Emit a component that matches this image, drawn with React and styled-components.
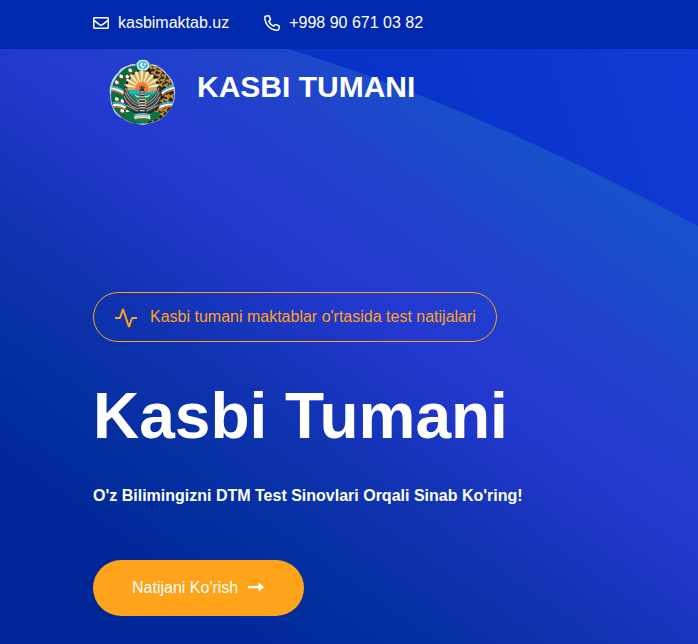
import React from 'react';
import styled, { createGlobalStyle } from 'styled-components';
import { FaRegEnvelope } from 'react-icons/fa';

const GlobalStyle = createGlobalStyle`
  * { box-sizing: border-box; }
  body {
    margin: 0;
    background: #002797;
    color: #fff;
    font-family: "Liberation Sans", Arial, sans-serif;
    font-size: 16px;
    line-height: 24px;
  }
`;

const Page = styled.div`
  display: flex;
  flex-direction: column;
  min-height: 100vh;
`;

const Container = styled.div`
  width: 100%;
  max-width: 540px;
  margin: 0 auto;
  padding: 0 14px;
`;

const TopBar = styled.div`
  background: #0029ae;
  padding: 11px 0 14px;
`;

const ContactList = styled.address`
  display: flex;
  flex-wrap: wrap;
  gap: 0 35px;
  font-style: normal;
`;

const ContactLink = styled.a`
  display: inline-flex;
  align-items: center;
  gap: 9px;
  color: #fff;
  text-decoration: none;
`;

const Hero = styled.div`
  position: relative;
  flex: 1;
  overflow: hidden;
`;

const Backdrop = styled.svg`
  position: absolute;
  inset: 0;
  width: 100%;
  height: 100%;
`;

const HeroBody = styled.div`
  position: relative;
`;

const Brand = styled.a`
  display: flex;
  align-items: flex-start;
  gap: 21px;
  padding: 10px 0 0 16px;
  color: #fff;
  text-decoration: none;
`;

const BrandName = styled.span`
  padding-top: 10px;
  font-size: 30px;
  line-height: 36px;
  font-weight: 700;
`;

const Intro = styled.main`
  display: flex;
  flex-direction: column;
  align-items: flex-start;
  padding: 166px 0 28px;
`;

const Tag = styled.p`
  display: flex;
  align-items: center;
  gap: 12px;
  margin: 0 0 36px;
  padding: 12px 20px;
  border: 1px solid #ffa31a;
  border-radius: 25px;
  color: #ffa31a;
`;

const Title = styled.h1`
  margin: 0 0 30px;
  font-size: 64px;
  line-height: 76px;
  font-weight: 700;
`;

const Lead = styled.p`
  margin: 0 0 52px;
  font-weight: 700;
`;

const ResultsButton = styled.button`
  display: inline-flex;
  align-items: center;
  gap: 9px;
  padding: 16px 39px;
  border: 0;
  border-radius: 28px;
  background: #ffa31a;
  color: #fff;
  font: inherit;
  cursor: pointer;
`;

const PhoneIcon = () => (
  <svg width="16" height="16" viewBox="0 0 16 16" fill="none" stroke="currentColor" strokeWidth="1.5" strokeLinejoin="round" aria-hidden="true">
    <path d="M1.6 1.3 4.2.7Q4.9.6 5.2 1.2L6.4 4.1Q6.6 4.7 6.2 5.1L4.8 6.3Q6.4 9.6 9.7 11.2L10.9 9.8Q11.3 9.4 11.9 9.6L14.8 10.8Q15.4 11.1 15.3 11.8L14.7 14.4Q14.5 15.2 13.7 15.2C6.5 15.2.8 9.5.8 2.3Q.8 1.5 1.6 1.3Z" />
  </svg>
);

const ArrowIcon = () => (
  <svg width="18" height="18" viewBox="0 0 18 18" fill="currentColor" aria-hidden="true">
    <path d="M1.4 6.9H11.4V5Q11.4 3.5 12.7 4.3L16.4 7.4Q17.1 8 16.4 8.7L12.7 11.8Q11.4 12.6 11.4 11.1V9.2H1.4Q1 9.2 1 8.8V7.3Q1 6.9 1.4 6.9Z" />
  </svg>
);

const PulseIcon = () => (
  <svg width="24" height="24" viewBox="0 0 24 24" fill="none" stroke="currentColor" strokeWidth="2" strokeLinejoin="bevel" aria-hidden="true">
    <path d="M1 13H6L9 4 15 22 18 13H23" />
  </svg>
);

const HeroBackdrop = () => (
  <Backdrop viewBox="0 0 698 595" preserveAspectRatio="none" aria-hidden="true">
    <defs>
      <linearGradient id="sky" gradientUnits="userSpaceOnUse" x1="400" y1="100" x2="698" y2="0">
        <stop offset="0" stopColor="#0833c8" />
        <stop offset="1" stopColor="#103bd6" />
      </linearGradient>
      <linearGradient id="disc" gradientUnits="userSpaceOnUse" x1="121" y1="506" x2="496" y2="-23">
        <stop offset="0" stopColor="#002797" />
        <stop offset="0.14" stopColor="#042f9f" />
        <stop offset="0.32" stopColor="#1033b1" />
        <stop offset="0.5" stopColor="#2138cb" />
        <stop offset="0.55" stopColor="#2439d0" />
        <stop offset="0.74" stopColor="#1f45cb" />
        <stop offset="0.91" stopColor="#1752cb" />
      </linearGradient>
    </defs>
    <rect width="698" height="595" fill="url(#sky)" />
    <path d="M0 0H288Q479 59 698 177V595H0Z" fill="url(#disc)" />
  </Backdrop>
);

const rays = [-80, -60, -40, -20, 0, 20, 40, 60, 80];
const grains = [
  [150, 50], [165, 53], [180, 62], [161, 67], [176, 75], [192, 76], [172, 88], [188, 90], [204, 91],
  [181, 103], [197, 105], [213, 106], [185, 151], [200, 149], [187, 163], [181, 177], [195, 179],
  [169, 185], [156, 193], [171, 199], [185, 191], [155, 207], [200, 137], [213, 138],
];
const cotton = [[91, 60], [64, 78], [83, 79], [51, 96], [51, 146], [68, 152], [67, 181], [83, 184], [94, 195]];

const Emblem = () => (
  <svg width="67" height="67" viewBox="27 25 200 200" role="img" aria-label="O'zbekiston gerbi">
    <path d="M110 42Q113 27 128 27T147 42Q164 38 178 50 193 56 199 70 215 82 219 99 227 116 223 134 224 154 211 170 204 190 185 202 168 216 146 217 127 226 108 217 84 217 67 201 45 194 38 171 29 153 31 133 26 115 33 98 39 77 54 66 62 50 83 45 96 36 110 42Z" fill="#cbd5ea" />
    <path d="M112 45Q82 42 61 65 33 93 33 131 31 171 60 195 87 220 126 218V46Z" fill="#086c3b" />
    <path d="M145 45Q172 43 193 67 221 93 221 132 219 173 191 197 165 219 128 217V46Z" fill="#2b2414" />
    <g fill="#bd9546">
      {grains.map(([x, y]) => (
        <path key={`${x}-${y}`} d={`M${x - 7} ${y - 5}q8-2 14 8l-2 4q-8-7-14-7ZM${x + 8} ${y - 9}q-2 8-7 10l-2-4q2-6 9-6Z`} />
      ))}
    </g>
    {cotton.map(([x, y]) => (
      <g key={`${x}-${y}`}>
        <path d={`M${x - 8} ${y + 1}l7 9 9-4-3-7Z`} fill="#a6421c" />
        <path d={`M${x - 6} ${y - 4}q4-6 7-1 6 1 4 6-2 4-7 2-5 1-4-7Z`} fill="#fff" />
      </g>
    ))}
    <g fill="none" strokeWidth="6">
      <path d="M34 106Q54 109 72 121M184 122Q202 109 221 105M38 157Q58 153 77 164M177 165Q194 153 218 155" stroke="#30add9" />
      <path d="M34 112Q54 115 72 127M184 128Q202 115 221 111M39 163Q58 159 77 170M177 171Q194 159 216 161" stroke="#fff" />
      <path d="M34 118Q54 121 72 133M184 134Q202 121 221 117M41 169Q59 165 77 176M177 177Q194 165 214 167" stroke="#f17832" strokeWidth="4" />
    </g>
    <ellipse cx="126" cy="126" rx="54" ry="67" fill="#252621" />
    <ellipse cx="126" cy="118" rx="45" ry="57" fill="#d1a85c" />
    <g fill="#fff1c4">
      {rays.map((angle) => (
        <path key={angle} d="M124 98 121 61Q125 57 129 61L126 98Z" transform={`rotate(${angle} 125 112)`} />
      ))}
    </g>
    <circle cx="125" cy="114" r="20" fill="#f57834" />
    <path d="M82 119Q103 115 125 121T169 119L165 149 85 149Z" fill="#159d86" />
    <path d="M85 121Q106 116 120 122T167 120L164 129H88Z" fill="#20b4cf" />
    <path d="M91 135 108 128 122 144 103 148ZM161 134 142 128 130 145 149 149Z" fill="#16935b" />
    <path d="M105 132q10 10 15 3M148 132q-10 10-15 3" fill="none" stroke="#edf5dd" strokeWidth="3" />
    <path d="M76 100Q83 135 115 154L118 185Q81 182 71 150 68 126 76 100ZM176 100Q169 135 137 154L134 185Q171 182 181 150 184 126 176 100Z" fill="#393b39" />
    <path d="M74 124Q85 155 117 167M72 136Q86 170 117 174M76 112Q85 146 116 159M78 163L113 180M178 124Q167 155 135 167M180 136Q166 170 135 174M176 112Q167 146 136 159M174 163L139 180" fill="none" stroke="#a4a6a3" strokeWidth="3" />
    <path d="M119 118 124 105Q131 105 132 118L136 179 127 188 116 179Z" fill="#303532" />
    <path d="M117 109Q125 103 135 109L130 114H120Z" fill="#555148" />
    <path d="M120 123H131M119 130H133M118 138H134M117 146H135M116 155H136M116 163H136M117 171H135M119 179H133" fill="none" stroke="#c7c9c4" strokeWidth="4" />
    <path d="M72 185Q91 178 103 188V211L78 202ZM180 185Q162 178 150 188V211L175 202Z" fill="#0b7542" />
    <path d="M103 189Q126 184 150 189V196Q126 191 103 196Z" fill="#45b7d0" />
    <path d="M103 195Q126 191 150 195V204Q126 200 103 204Z" fill="#fff" />
    <path d="M106 199Q126 195 147 199" stroke="#f09057" strokeWidth="5" strokeDasharray="3 2" fill="none" />
    <path d="M102 205Q126 200 150 205L146 214Q126 218 106 213Z" fill="#108249" />
    <path d="M118 29H139L147 38 146 51 138 59H119L111 51 110 38Z" fill="#e3f5fb" />
    <path d="M119 32H137L143 39V48L136 55H120L114 48V39Z" fill="#43bfe0" />
    <path d="M130 34Q117 37 121 47 125 54 136 48 127 50 125 43 124 38 130 34Z" fill="#fff" />
    <circle cx="134" cy="41" r="3" fill="#fff" />
  </svg>
);

export default function App() {
  return (
    <Page>
      <GlobalStyle />
      <TopBar>
        <Container>
          <ContactList>
            <ContactLink href="https://kasbimaktab.uz">
              <FaRegEnvelope aria-hidden="true" />
              kasbimaktab.uz
            </ContactLink>
            <ContactLink href="tel:+998906710382">
              <PhoneIcon />
              +998 90 671 03 82
            </ContactLink>
          </ContactList>
        </Container>
      </TopBar>
      <Hero>
        <HeroBackdrop />
        <HeroBody>
          <Container>
            <header>
              <Brand href="/">
                <Emblem />
                <BrandName>KASBI TUMANI</BrandName>
              </Brand>
            </header>
            <Intro>
              <Tag>
                <PulseIcon />
                Kasbi tumani maktablar o'rtasida test natijalari
              </Tag>
              <Title>Kasbi Tumani</Title>
              <Lead>O'z Bilimingizni DTM Test Sinovlari Orqali Sinab Ko'ring!</Lead>
              <ResultsButton type="button">
                Natijani Ko'rish
                <ArrowIcon />
              </ResultsButton>
            </Intro>
          </Container>
        </HeroBody>
      </Hero>
    </Page>
  );
}
